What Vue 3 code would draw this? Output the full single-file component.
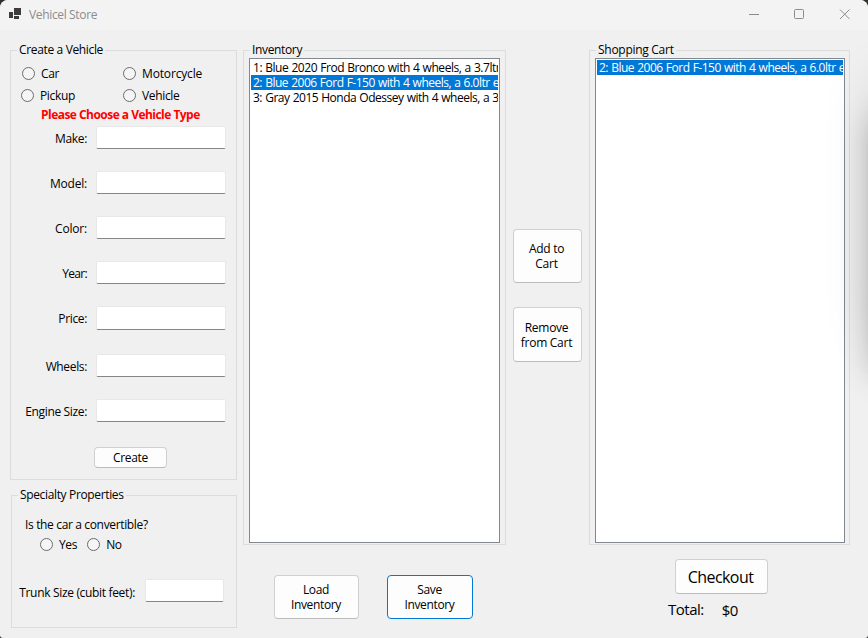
<script setup>
import { ref } from 'vue'

const types = ['Car', 'Motorcycle', 'Pickup', 'Vehicle']
const fields = ['Make', 'Model', 'Color', 'Year', 'Price', 'Wheels', 'Engine Size']
const inventory = [
  '1: Blue 2020 Frod Bronco with 4 wheels, a 3.7ltr',
  '2: Blue 2006 Ford F-150 with 4 wheels, a 6.0ltr e',
  '3: Gray 2015 Honda Odessey with 4 wheels, a 3',
]
const cart = ['2: Blue 2006 Ford F-150 with 4 wheels, a 6.0ltr e']
const selectedInventory = ref(1)
const selectedCart = ref(0)
const slug = (s) => s.toLowerCase().replace(' ', '-')
</script>

<template>
  <div class="window">
    <header class="titlebar">
      <svg class="app-icon" width="13" height="12" viewBox="0 0 13 12">
        <path d="M5 0h7v7H5zM0 4h4v6H0zM5 8h5v3H5z" fill="#3c3c3c" />
      </svg>
      <span class="title">Vehicel Store</span>
      <svg class="controls" width="104" height="12" viewBox="0 0 104 12" fill="none" stroke="#8c8c8c">
        <path d="M1 5.5h10" />
        <rect x="46.5" y=".5" width="9" height="9" rx="1" />
        <path d="M92 .5l9.5 9.5M101.5 .5L92 10" />
      </svg>
    </header>

    <main class="content">
      <div class="left">
        <section class="group create">
          <h2 class="legend">Create a Vehicle</h2>
          <div class="types">
            <label v-for="t in types" :key="t" class="radio" :class="slug(t)">
              <i class="dot"></i><span>{{ t }}</span>
            </label>
          </div>
          <p class="warning">Please Choose a Vehicle Type</p>
          <div class="fields">
            <label v-for="f in fields" :key="f" class="field" :class="slug(f)">
              <span>{{ f }}:</span><input class="box" />
            </label>
          </div>
          <button class="btn create-btn">Create</button>
        </section>

        <section class="group specialty">
          <h2 class="legend">Specialty Properties</h2>
          <p class="question">Is the car a convertible?</p>
          <div class="answers">
            <label class="radio"><i class="dot"></i><span>Yes</span></label>
            <label class="radio"><i class="dot"></i><span>No</span></label>
          </div>
          <label class="trunk"><span>Trunk Size (cubit feet):</span><input class="box" /></label>
        </section>
      </div>

      <div class="middle">
        <section class="group list-group">
          <h2 class="legend">Inventory</h2>
          <ul class="list">
            <li v-for="(v, i) in inventory" :key="v" :class="{ first: i === 0, selected: i === selectedInventory }" @click="selectedInventory = i">{{ v }}</li>
          </ul>
        </section>
        <div class="file-actions">
          <button class="btn">Load<br />Inventory</button>
          <button class="btn focused">Save<br />Inventory</button>
        </div>
      </div>

      <div class="transfer">
        <button class="btn add">Add to<br />Cart</button>
        <button class="btn remove">Remove<br />from Cart</button>
      </div>

      <div class="right">
        <section class="group list-group cart">
          <h2 class="legend">Shopping Cart</h2>
          <ul class="list">
            <li v-for="(v, i) in cart" :key="v" :class="{ selected: i === selectedCart }">{{ v }}</li>
          </ul>
        </section>
        <button class="btn checkout">Checkout</button>
        <div class="total"><span>Total:</span><span class="amount">$0</span></div>
      </div>
    </main>
    <div class="edge-shadow"></div>
  </div>
</template>

<style>
body { background: #30302f; }
</style>

<style scoped>
* { box-sizing: border-box; margin: 0; padding: 0; }
.window {
  position: relative;
  width: 868px;
  height: 638px;
  overflow: hidden;
  border-radius: 8px 8px 3px 3px;
  background: #f0f0f0;
  color: #000;
  font: 12px/15px "Open Sans", "Noto Sans", sans-serif;
  letter-spacing: -0.35px;
  white-space: nowrap;
}
.titlebar { display: flex; height: 30px; padding: 8px 16px 0 9px; background: #f3f3f3; }
.app-icon { margin-right: 7px; }
.title { flex: 1; color: #8c8c8c; line-height: 14px; }
.controls { margin-top: 1px; }
.content { display: grid; grid-template-columns: 226px 263px 69px 261px; column-gap: 7px; padding: 20px 0 0 10px; }
.group { border: 1px solid #dcdcdc; }
.legend { width: fit-content; height: 14px; margin: -8px 0 0 6px; padding: 0 2px; background: #f0f0f0; font: inherit; line-height: 14px; }
.left { display: flex; flex-direction: column; gap: 15px; width: 227px; }
.create { height: 430px; }
.types { display: grid; grid-template-columns: 102px 1fr; row-gap: 7px; padding: 9px 0 0 10px; }
.radio { display: flex; align-items: center; gap: 6px; height: 15px; }
.car { padding-left: 1px; }
.motorcycle { letter-spacing: -0.15px; }
.dot { width: 13px; height: 13px; border: 1px solid #6c6c6c; border-radius: 50%; background: #f5f5f5; }
.warning { margin: 4px 0 0 30px; color: #f00; font-weight: 700; letter-spacing: -0.53px; }
.fields { display: flex; flex-direction: column; gap: 22px; padding: 4px 10px 0 0; }
.field { display: flex; justify-content: flex-end; gap: 9px; height: 23px; line-height: 25px; }
.field.model, .field.color { letter-spacing: -0.2px; }
.field.year { letter-spacing: -0.7px; }
.field.price { height: 24px; line-height: 26px; }
.field.wheels { margin-top: 2px; }
.box { width: 130px; height: 100%; border: 1px solid #e8e8e8; border-bottom-color: #868686; border-radius: 2px; background: #fff; outline: 0; }
.btn { border: 1px solid #d0d0d0; border-bottom-color: #bcbcbc; border-radius: 4px; background: #fdfdfd; color: #000; font: inherit; letter-spacing: inherit; }
.create-btn { display: block; width: 73px; height: 21px; margin: 25px 0 0 83px; line-height: 19px; }
.specialty { height: 133px; margin-left: 1px; }
.question { margin: 15px 0 0 13px; }
.answers { display: flex; gap: 10px; margin: 5px 0 0 28px; }
.trunk { display: flex; justify-content: flex-end; gap: 10px; height: 23px; margin: 27px 12px 0 0; line-height: 27px; letter-spacing: -0.33px; }
.trunk .box { width: 79px; }
.middle, .right { display: flex; flex-direction: column; }
.list-group { height: 495px; padding: 0 5px; }
.list-group .legend { margin-left: 1px; }
.cart { padding-right: 4px; }
.cart .legend { letter-spacing: -0.28px; }
.list { height: 485px; margin-top: 1px; border: 1px solid #828790; background: #fff; padding: 1px; list-style: none; }
.list li { height: 15px; padding-left: 2px; overflow: hidden; letter-spacing: -0.49px; word-spacing: 0.5px; }
.list .first { letter-spacing: -0.46px; }
.list .selected { background: #0078d7; color: #fff; }
.file-actions { display: flex; gap: 28px; padding: 30px 0 0 31px; }
.file-actions .btn { width: 85px; height: 44px; padding-right: 1px; }
.file-actions .focused { width: 86px; border-color: #0078d4; }
.transfer { display: flex; flex-direction: column; gap: 24px; padding-top: 179px; }
.transfer .btn { padding-right: 2px; letter-spacing: -0.28px; }
.add { height: 54px; }
.remove { height: 55px; }
.checkout { width: 93px; height: 35px; margin: 14px 0 0 86px; padding: 2px 2px 0 0; font-size: 16px; letter-spacing: -0.55px; }
.total { display: flex; gap: 18px; margin: 5px 0 0 79px; font-size: 15px; line-height: 20px; letter-spacing: -0.5px; }
.total .amount { margin-top: 1px; }
.edge-shadow { position: absolute; left: 875px; top: 120px; width: 200px; height: 255px; box-shadow: 0 0 32px rgba(0, 0, 0, .3), 0 -40px 50px rgba(0, 0, 0, .13); pointer-events: none; }
</style>
